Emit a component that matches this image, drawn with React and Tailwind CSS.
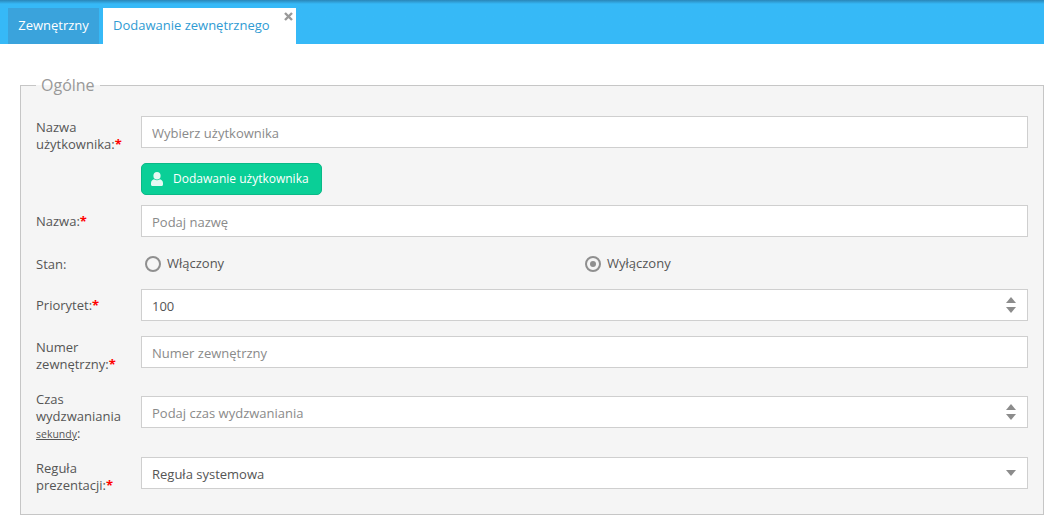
import React from "react";

function Required() {
  return <span className="text-[#ff0000] font-bold">*</span>;
}

function Field({ placeholder, value, icon }) {
  return (
    <div className="flex-1 h-8 flex items-center bg-white border border-[#cfcfcf]">
      <input
        readOnly
        placeholder={placeholder}
        value={value}
        className="flex-1 min-w-0 h-full pt-[2px] pl-[10px] text-[13px] text-[#555555] placeholder:text-[#8a8a8a] outline-none"
      />
      {icon}
    </div>
  );
}

function Spinner() {
  return (
    <svg width="10" height="20" viewBox="0 0 10 20" className="mr-[11px] fill-[#8c8c8c]">
      <path d="M5 2 10 8H0z" />
      <path d="M0 12H10L5 18z" />
    </svg>
  );
}

function Caret() {
  return (
    <svg width="10" height="6" viewBox="0 0 10 6" className="mr-[11px] fill-[#8c8c8c]">
      <path d="M0 0H10L5 6z" />
    </svg>
  );
}

function Radio({ checked, label }) {
  return (
    <div className="flex items-center pl-1">
      <span className="w-4 h-4 rounded-full border-2 border-[#8f8f8f] bg-[#f5f5f5] flex items-center justify-center">
        {checked && <span className="w-[6px] h-[6px] rounded-full bg-[#8f8f8f]" />}
      </span>
      <span className="ml-[6px] text-[13px] text-[#555555]">{label}</span>
    </div>
  );
}

function Label({ children, className = "" }) {
  return <label className={`w-[105px] shrink-0 text-[13px] leading-[17px] text-[#555555] ${className}`}>{children}</label>;
}

export default function App() {
  return (
    <div className="w-[1044px] h-[515px] overflow-hidden bg-white font-['Open_Sans',sans-serif]">
      <div className="h-11 bg-linear-to-b from-[#2a86b8] to-[#36b9f7] to-[4px] flex items-end pl-2 gap-1">
        <div className="h-9 w-[91px] bg-[#3aa3dc] text-white text-[13px] flex items-center justify-center">Zewnętrzny</div>
        <div className="relative h-9 w-[193px] bg-white text-[#2f9bd3] text-[13px] flex items-center pl-[10px]">
          Dodawanie zewnętrznego
          <svg width="9" height="9" viewBox="0 0 9 9" className="absolute top-[4px] right-[3px] stroke-[#999999]" strokeWidth="2.4">
            <path d="M1 1 8 8M8 1 1 8" />
          </svg>
        </div>
      </div>

      <fieldset className="mt-[31px] ml-5 h-[440px] border border-[#c6c6c6] bg-[#f5f5f5] pl-[15px] pr-[15px]">
        <legend className="px-[5px] text-[16px] leading-5 text-[#999999]">Ogólne</legend>

        <div className="flex items-start mt-[21px]">
          <Label className="pt-[3px]">Nazwa użytkownika:<Required /></Label>
          <Field placeholder="Wybierz użytkownika" />
        </div>

        <div className="pl-[105px] mt-[10px]">
          <button className="h-8 w-[181px] flex items-center pl-[9px] rounded-[5px] bg-[#0acf97] border border-[#0ab987] text-white text-[12px] font-medium">
            <svg width="12" height="14" viewBox="0 0 12 14" className="fill-[#e6f9f3]">
              <ellipse cx="6" cy="3.800" rx="3.600" ry="3.800" />
              <path d="M1.500 14C.6 14 0 13.400 0 12.500v-1.500C0 8.800 1.600 7.500 3 7.200c.8.700 1.900 1.100 3 1.100s2.200-.4 3-1.100c1.400.3 3 1.600 3 3.800v1.500c0 .9-.6 1.500-1.500 1.500z" />
            </svg>
            <span className="ml-[10px]">Dodawanie użytkownika</span>
          </button>
        </div>

        <div className="flex items-start mt-[10px]">
          <Label className="pt-[8px]">Nazwa:<Required /></Label>
          <Field placeholder="Podaj nazwę" />
        </div>

        <div className="flex items-center h-5 mt-[17px]">
          <Label>Stan:</Label>
          <div className="flex-1 grid grid-cols-[440px_1fr]">
            <Radio label="Włączony" />
            <Radio checked label="Wyłączony" />
          </div>
        </div>

        <div className="flex items-start mt-[15px]">
          <Label className="pt-[8px]">Priorytet:<Required /></Label>
          <Field value="100" icon={<Spinner />} />
        </div>

        <div className="flex items-start mt-[15px]">
          <Label className="pt-[3px]">Numer zewnętrzny:<Required /></Label>
          <Field placeholder="Numer zewnętrzny" />
        </div>

        <div className="flex items-start mt-[23px]">
          <Label className="-mt-[5px]">
            Czas wydzwaniania <span className="text-[10.5px] underline">sekundy</span>:
          </Label>
          <Field placeholder="Podaj czas wydzwaniania" icon={<Spinner />} />
        </div>

        <div className="flex items-start mt-[14px]">
          <Label className="pt-[3px]">Reguła prezentacji:<Required /></Label>
          <Field value="Reguła systemowa" icon={<Caret />} />
        </div>
      </fieldset>
    </div>
  );
}
